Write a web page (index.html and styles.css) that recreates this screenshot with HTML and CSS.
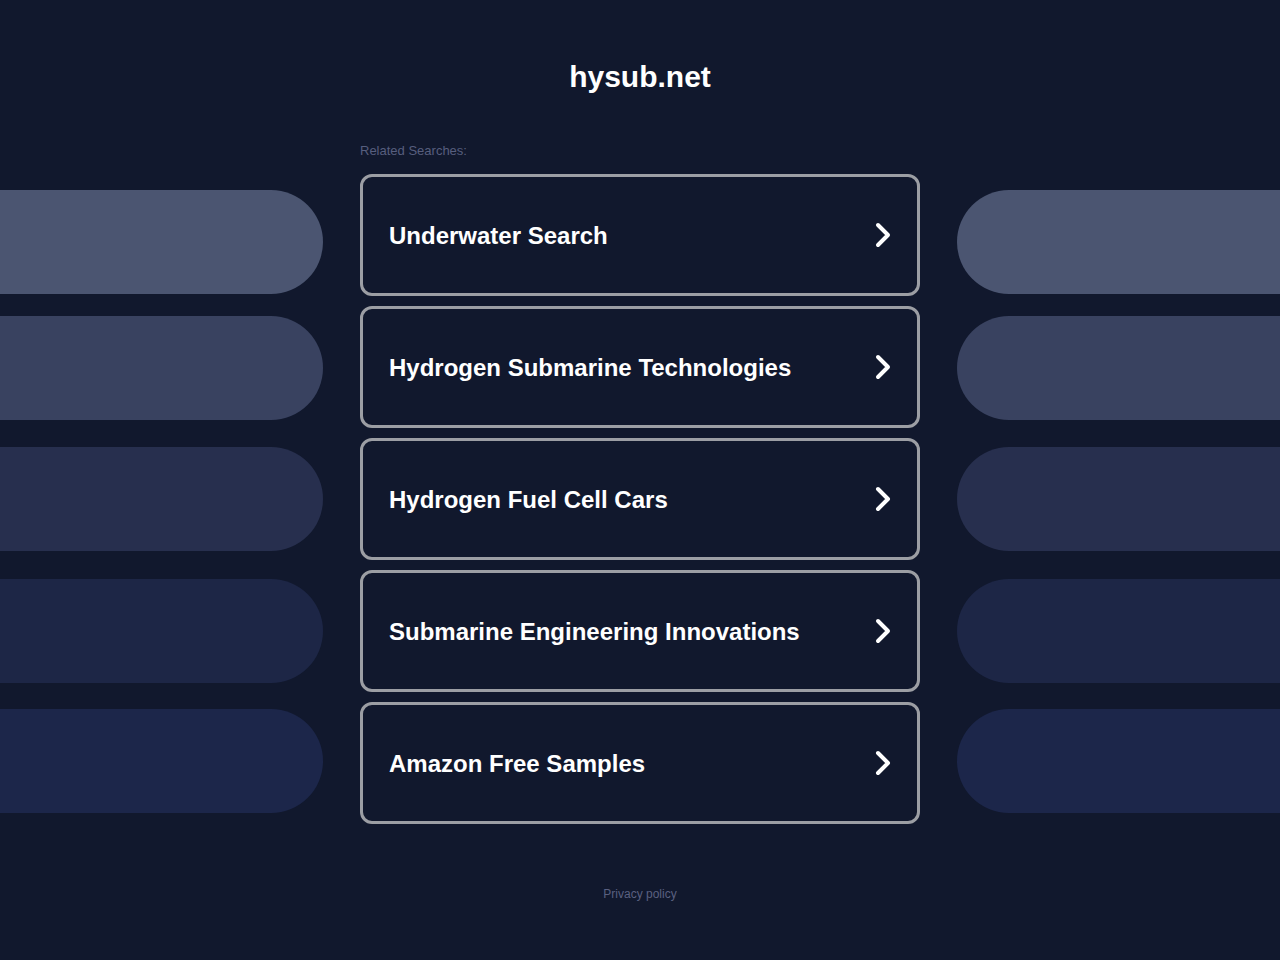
FILE: index.html
```html
<!DOCTYPE html>
<html lang="en">
<head>
<meta charset="utf-8">
<title>hysub.net</title>
<link rel="stylesheet" href="styles.css">
</head>
<body>
<header class="header">
  <h1 class="title">hysub.net</h1>
</header>
<main class="main">
  <div class="side side-left">
    <div class="pill p1"></div>
    <div class="pill p2"></div>
    <div class="pill p3"></div>
    <div class="pill p4"></div>
    <div class="pill p5"></div>
  </div>
  <div class="center">
    <div class="label">Related Searches:</div>
    <ul class="cards">
      <li class="card"><span class="card-text">Underwater Search</span><svg class="chev" viewBox="0 0 18 28" width="18" height="28"><path d="M4 4 L14 14 L4 24"/></svg></li>
      <li class="card"><span class="card-text">Hydrogen Submarine Technologies</span><svg class="chev" viewBox="0 0 18 28" width="18" height="28"><path d="M4 4 L14 14 L4 24"/></svg></li>
      <li class="card"><span class="card-text">Hydrogen Fuel Cell Cars</span><svg class="chev" viewBox="0 0 18 28" width="18" height="28"><path d="M4 4 L14 14 L4 24"/></svg></li>
      <li class="card"><span class="card-text">Submarine Engineering Innovations</span><svg class="chev" viewBox="0 0 18 28" width="18" height="28"><path d="M4 4 L14 14 L4 24"/></svg></li>
      <li class="card"><span class="card-text">Amazon Free Samples</span><svg class="chev" viewBox="0 0 18 28" width="18" height="28"><path d="M4 4 L14 14 L4 24"/></svg></li>
    </ul>
  </div>
  <div class="side side-right">
    <div class="pill p1"></div>
    <div class="pill p2"></div>
    <div class="pill p3"></div>
    <div class="pill p4"></div>
    <div class="pill p5"></div>
  </div>
</main>
<footer class="footer">
  <a class="privacy" href="#">Privacy policy</a>
</footer>
</body>
</html>
```

FILE: styles.css
```css
html, body {
  margin: 0;
  padding: 0;
}
body {
  background: #11182d;
  font-family: "Liberation Sans", Arial, sans-serif;
  color: #ffffff;
  min-height: 960px;
}
.header {
  padding-top: 58px;
  text-align: center;
}
.title {
  margin: 0;
  font-size: 30px;
  line-height: 38px;
  font-weight: bold;
  color: #ffffff;
}
.main {
  margin-top: 44px;
  display: grid;
  grid-template-columns: 323px 560px 323px;
  column-gap: 37px;
}
.side {
  display: flex;
  flex-direction: column;
}
.pill {
  height: 104px;
}
.side-left .pill {
  border-radius: 0 52px 52px 0;
}
.side-right .pill {
  border-radius: 52px 0 0 52px;
}
.p1 { margin-top: 50px; background: #4b5571; }
.p2 { margin-top: 22px; background: #394260; }
.p3 { margin-top: 27px; background: #272f4e; }
.p4 { margin-top: 28px; background: #1d2646; }
.p5 { margin-top: 26px; background: #1c264a; }
.label {
  padding-top: 1px;
  font-size: 13px;
  line-height: 20px;
  color: #575e7e;
}
.cards {
  list-style: none;
  margin: 13px 0 0 0;
  padding: 0;
  display: flex;
  flex-direction: column;
  gap: 10px;
}
.card {
  box-sizing: border-box;
  height: 122px;
  border: 3px solid #9c9ea4;
  border-radius: 12px;
  padding: 2px 25px 0 26px;
  display: flex;
  align-items: center;
  justify-content: space-between;
}
.card-text {
  font-size: 24px;
  font-weight: bold;
  color: #ffffff;
}
.chev {
  display: block;
  margin-top: -2px;
  fill: none;
  stroke: #ffffff;
  stroke-width: 4;
  stroke-linecap: round;
  stroke-linejoin: round;
}
.footer {
  margin-top: 60px;
  text-align: center;
}
.privacy {
  font-size: 12px;
  line-height: 14px;
  color: #5a6080;
  text-decoration: none;
}
```
